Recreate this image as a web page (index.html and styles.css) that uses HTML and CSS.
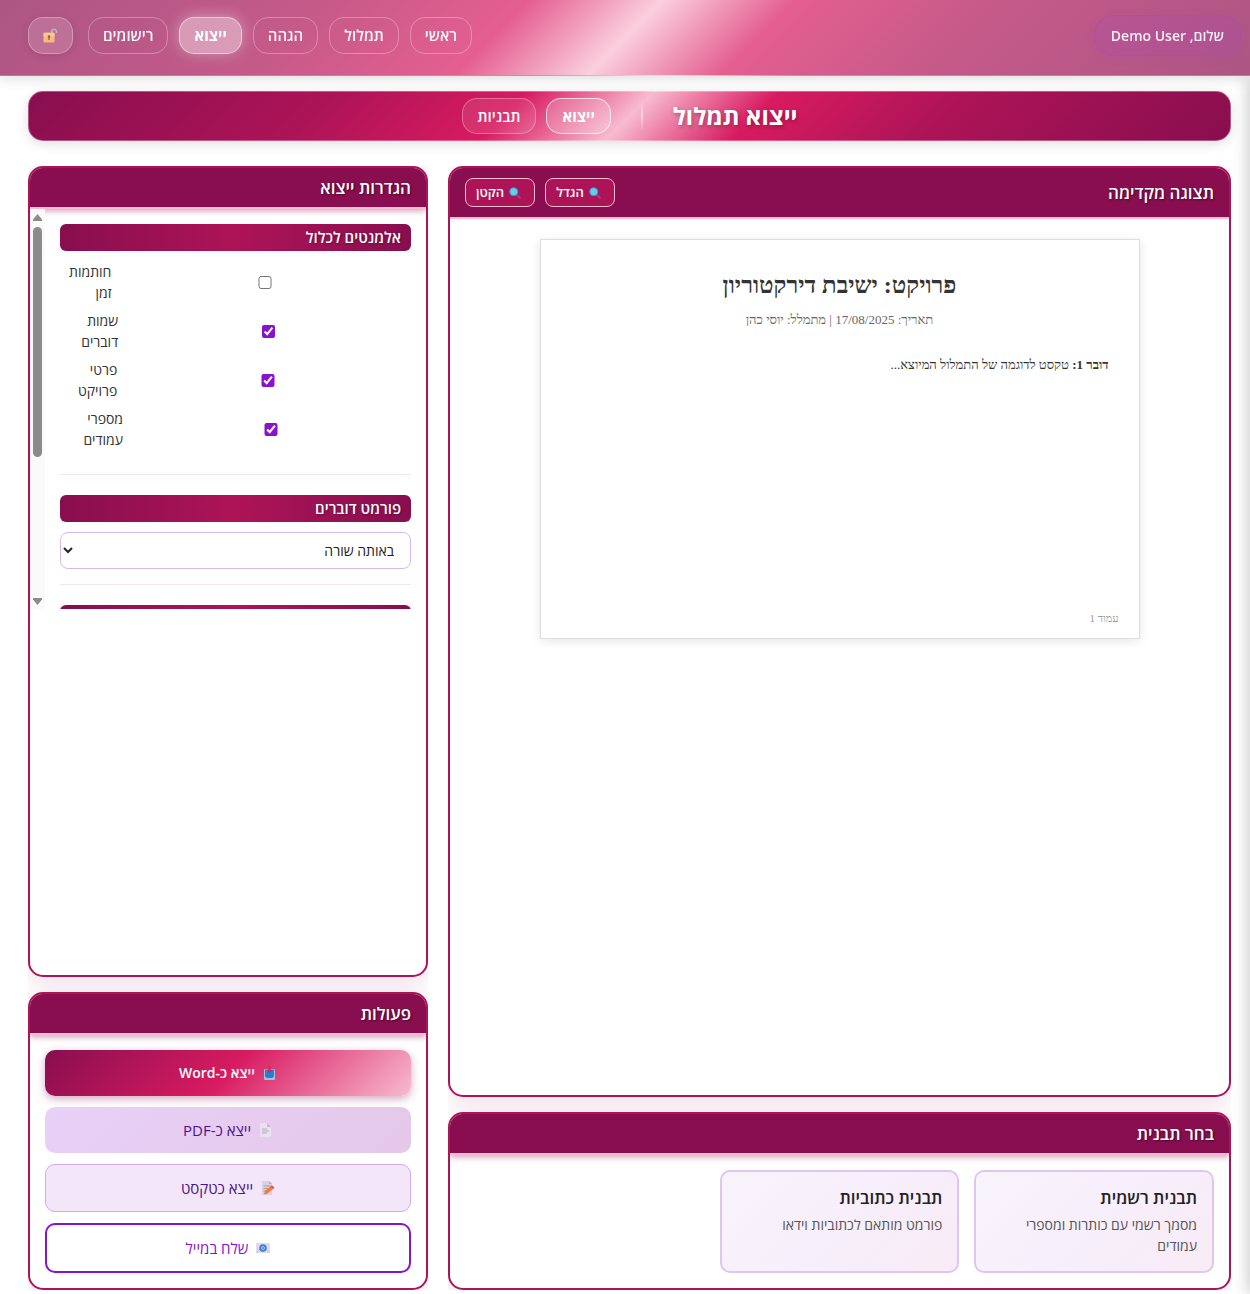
FILE: index.html
```html
<!DOCTYPE html>
<html lang="he" dir="rtl">
<head>
<meta charset="utf-8">
<meta name="viewport" content="width=device-width, initial-scale=1">
<title>ייצוא תמלול</title>
<link rel="stylesheet" href="styles.css">
</head>
<body>
<header class="site-header">
  <div class="user-pill">שלום, Demo User</div>
  <nav class="site-nav">
    <a class="nav-link" href="#">ראשי</a>
    <a class="nav-link" href="#">תמלול</a>
    <a class="nav-link" href="#">הגהה</a>
    <a class="nav-link nav-link-active" href="#">ייצוא</a>
    <a class="nav-link" href="#">רישומים</a>
    <button class="nav-link lock-button" type="button" aria-label="נעילה">
      <svg class="icon-lock" viewBox="0 0 15 15"><path d="M8.700 5.500V3.700a2.400 2.400 0 0 1 4.800 0V5" fill="none" stroke="#b9b3c4" stroke-width="1.600"/><rect x="0.500" y="4.800" width="11" height="9.700" rx="1" fill="#fbb878"/><rect x="0.500" y="4.800" width="11" height="4" rx="1" fill="#fdca85"/><circle cx="6" cy="8.600" r="1.300" fill="#7b6270"/><path d="M6 8.600v3.300" stroke="#7b6270" stroke-width="1.200"/></svg>
    </button>
  </nav>
</header>

<div class="page">
  <div class="title-bar">
    <h1 class="page-title">ייצוא תמלול</h1>
    <span class="title-divider"></span>
    <nav class="tabs">
      <a class="tab tab-active" href="#">ייצוא</a>
      <a class="tab" href="#">תבניות</a>
    </nav>
  </div>

  <main class="workspace">
    <div class="column column-main">
      <section class="panel panel-grow">
        <div class="panel-header panel-header-tools">
          <h2 class="panel-title">תצוגה מקדימה</h2>
          <div class="zoom-tools">
            <button class="zoom-button" type="button"><svg class="icon-zoom" viewBox="-1 0 16 12"><path d="M7.500 7.500l3.300 3.300" stroke="#7a4f93" stroke-width="2" stroke-linecap="round"/><circle cx="4.700" cy="4.700" r="4" fill="#5fd0ee" stroke="#4a90c4"/></svg>הגדל</button>
            <button class="zoom-button" type="button"><svg class="icon-zoom" viewBox="-1 0 16 12"><path d="M7.500 7.500l3.300 3.300" stroke="#7a4f93" stroke-width="2" stroke-linecap="round"/><circle cx="4.700" cy="4.700" r="4" fill="#5fd0ee" stroke="#4a90c4"/></svg>הקטן</button>
          </div>
        </div>
        <div class="preview-area">
          <article class="sheet">
            <h3 class="sheet-title">פרויקט: ישיבת דירקטוריון</h3>
            <p class="sheet-meta">תאריך: 17/08/2025 | מתמלל: יוסי כהן</p>
            <p class="sheet-text"><strong>דובר 1:</strong> טקסט לדוגמה של התמלול המיוצא...</p>
            <p class="sheet-footer">עמוד 1</p>
          </article>
        </div>
      </section>

      <section class="panel">
        <div class="panel-header"><h2 class="panel-title">בחר תבנית</h2></div>
        <div class="template-grid">
          <div class="template-card">
            <h3 class="template-name">תבנית רשמית</h3>
            <p class="template-desc">מסמך רשמי עם כותרות ומספרי עמודים</p>
          </div>
          <div class="template-card">
            <h3 class="template-name">תבנית כתוביות</h3>
            <p class="template-desc">פורמט מותאם לכתוביות וידאו</p>
          </div>
        </div>
      </section>
    </div>

    <div class="column column-side">
      <section class="panel panel-grow">
        <div class="panel-header"><h2 class="panel-title">הגדרות ייצוא</h2></div>
        <div class="settings">
          <div class="settings-scroll">
            <div class="setting-group">
              <h3 class="group-title">אלמנטים לכלול</h3>
              <div class="check-list">
                <label class="check-row"><input class="check" type="checkbox"><span>חותמות זמן</span></label>
                <label class="check-row"><input class="check" type="checkbox" checked><span>שמות דוברים</span></label>
                <label class="check-row"><input class="check" type="checkbox" checked><span>פרטי פרויקט</span></label>
                <label class="check-row"><input class="check" type="checkbox" checked><span>מספרי עמודים</span></label>
              </div>
            </div>
            <div class="setting-group">
              <h3 class="group-title"><label for="speaker-format">פורמט דוברים</label></h3>
              <select class="format-select" id="speaker-format">
                <option>באותה שורה</option>
              </select>
            </div>
            <div class="setting-group setting-group-last">
              <div class="group-title"></div>
            </div>
          </div>
          <div class="scrollbar" aria-hidden="true">
            <svg class="scroll-arrow" viewBox="0 0 9 7"><path d="M4.500 0L9 5.500V7H0V5.500z" fill="#8b8b8b"/></svg>
            <div class="scroll-track"><div class="scroll-thumb"></div></div>
            <svg class="scroll-arrow" viewBox="0 0 9 7"><path d="M4.500 7L9 1.500V0H0v1.500z" fill="#8b8b8b"/></svg>
          </div>
        </div>
      </section>

      <section class="panel">
        <div class="panel-header"><h2 class="panel-title">פעולות</h2></div>
        <div class="actions">
          <button class="action action-word" type="button"><svg class="icon-action" viewBox="0 0 14 14"><rect x="1" y="3" width="11" height="11" rx="1" fill="#a9bfd8"/><path d="M2 3.500h9v7l-2 1.500H4l-2-1.500z" fill="#1c84d8"/><path d="M5.500 0h2v4h2l-3 3.500L3.500 4h2z" fill="#c9295c"/></svg>ייצא כ-Word</button>
          <button class="action action-pdf" type="button"><svg class="icon-action" viewBox="0 0 14 14"><path d="M1 0h7l4 4v10H1z" fill="#e9e0f0"/><path d="M8 0l4 4H8z" fill="#c5bccf"/><path d="M3 6h5M3 8h7M3 10h5" stroke="#b5adbf"/></svg>ייצא כ-PDF</button>
          <button class="action action-text" type="button"><svg class="icon-action" viewBox="0 0 14 14"><path d="M1 0h7l3 3v11H1z" fill="#d9d1e0"/><path d="M8 0l3 3H8z" fill="#b5adbd"/><path d="M2.500 5h7M2.500 7.500h6M2.500 10h4" stroke="#a79fb0"/><path d="M3 13.500l1-3.500 6.500-5.500 2.500 2.500-6.500 5.500z" fill="#f47a3c"/><path d="M9.500 5.500l1.500-1.300 2.300 2.300L12 8z" fill="#ef5350"/></svg>ייצא כטקסט</button>
          <button class="action action-mail" type="button"><svg class="icon-action" viewBox="0 0 14 14"><rect y="2" width="14" height="10" fill="#e2daec"/><path d="M0 12l5-5M14 12L9 7" stroke="#c9bfd8"/><circle cx="7" cy="7" r="3.800" fill="#3f7fd0"/><circle cx="7" cy="7" r="1.500" fill="none" stroke="#a9cdf2"/></svg>שלח במייל</button>
        </div>
      </section>
    </div>
  </main>
</div>
<aside class="drawer"></aside>
</body>
</html>
```
FILE: styles.css
```css
* {
  box-sizing: border-box;
  margin: 0;
}

body {
  background: #fff;
  color: #333;
  font-family: "Open Sans", "Noto Sans", sans-serif;
  font-size: 14px;
  line-height: 22px;
}

a {
  color: inherit;
  text-decoration: none;
}

button,
select {
  font-family: inherit;
}

/* Header */
.site-header {
  position: relative;
  z-index: 2;
  display: flex;
  justify-content: space-between;
  align-items: center;
  padding: 15px 9px 19px 28px;
  background: linear-gradient(135deg, #ac5684 0%, #c65a89 25%, #e45f90 40%, #facfde 50%, #e45f90 60%, #c65a89 75%, #ac5684 100%);
  border-bottom: 1px solid rgba(255, 255, 255, 0.2);
  box-shadow: 0 3px 12px rgba(0, 0, 0, 0.13);
}

.user-pill {
  padding: 8px 16px;
  border: 1px solid rgba(171, 71, 188, 0.4);
  border-radius: 20px;
  background: rgba(171, 71, 188, 0.2);
  box-shadow: 0 2px 8px rgba(171, 71, 188, 0.15);
  color: rgba(255, 255, 255, 0.9);
  font-weight: 600;
  line-height: 23px;
}

.site-nav {
  display: flex;
  align-items: center;
  gap: 11px;
}

.nav-link {
  padding: 7px 14px;
  border: 1px solid rgba(255, 255, 255, 0.3);
  border-radius: 15px;
  color: rgba(255, 255, 255, 0.95);
  font-size: 15px;
  font-weight: 600;
  line-height: 21px;
}

.nav-link-active {
  border-color: rgba(255, 255, 255, 0.5);
  background: rgba(255, 255, 255, 0.4);
  box-shadow: 0 0 15px rgba(255, 255, 255, 0.45), 0 4px 12px rgba(0, 0, 0, 0.1);
  color: #fff;
  font-weight: 700;
}

.lock-button {
  display: flex;
  align-items: center;
  height: 37px;
  margin-right: 4px;
  background: rgba(255, 255, 255, 0.15);
  box-shadow: 0 2px 8px rgba(0, 0, 0, 0.1);
}

.icon-lock {
  width: 15px;
  height: 15px;
}

/* Title bar */
.page {
  padding: 15px 19px 4px 28px;
}

.title-bar {
  display: flex;
  justify-content: center;
  align-items: center;
  gap: 30px;
  height: 50px;
  margin-bottom: 25px;
  border: 1px solid rgba(255, 255, 255, 0.3);
  border-radius: 15px;
  background: linear-gradient(135deg, #880e4f 0%, #ad1457 25%, #d81b60 40%, #f8bbd0 50%, #d81b60 60%, #ad1457 75%, #880e4f 100%) border-box;
  box-shadow: 0 3px 12px rgba(0, 0, 0, 0.13);
}

.page-title {
  color: #fff;
  font-size: 24px;
  font-weight: 700;
  line-height: 32px;
  text-shadow: 1px 2px 4px rgba(0, 0, 0, 0.3);
}

.title-divider {
  width: 2px;
  height: 30px;
  background: linear-gradient(transparent, rgba(255, 255, 255, 0.5), transparent);
}

.tabs {
  display: flex;
  gap: 10px;
}

.tab {
  padding: 6px 15px;
  border: 1px solid rgba(255, 255, 255, 0.3);
  border-radius: 15px;
  background: rgba(255, 255, 255, 0.1);
  color: #fff;
  font-size: 15px;
  font-weight: 600;
}

.tab-active {
  border-color: rgba(255, 255, 255, 0.7);
  background: rgba(255, 255, 255, 0.2);
  font-weight: 700;
}

/* Columns and panels */
.workspace {
  display: grid;
  grid-template-columns: minmax(0, 1fr) 400px;
  gap: 20px;
  min-height: calc(100vh - 170px);
}

.column {
  display: flex;
  flex-direction: column;
  gap: 15px;
  overflow: hidden;
}

.panel {
  border: 2px solid #ad1457;
  border-radius: 15px;
  background: #fff;
  box-shadow: 0 4px 20px rgba(136, 14, 79, 0.15);
  overflow: hidden;
}

.panel-grow {
  flex: 1;
}

.panel-header {
  display: flex;
  justify-content: space-between;
  align-items: center;
  padding: 8px 15px;
  border-bottom: 2px solid #f8bbd0;
  background: #880e4f;
  box-shadow: 0 2px 6px rgba(136, 14, 79, 0.4);
}

.panel-header-tools {
  padding: 10px 15px;
  box-shadow: none;
}

.panel-title {
  color: #fff;
  font-size: 17px;
  font-weight: 600;
  line-height: 23px;
  text-shadow: 1px 1px 2px rgba(0, 0, 0, 0.5);
}

.zoom-tools {
  display: flex;
  gap: 10px;
}

.zoom-button {
  display: flex;
  align-items: center;
  gap: 4px;
  padding: 5px 10px;
  border: 1px solid #f8bbd0;
  border-radius: 8px;
  background: #ad1457;
  color: #fff;
  font-size: 13px;
  font-weight: 600;
  line-height: 17px;
}

.icon-zoom {
  width: 16px;
  height: 12px;
}

/* Preview */
.preview-area {
  padding: 20px;
}

.sheet {
  position: relative;
  max-width: 600px;
  min-height: 400px;
  margin: 0 auto;
  padding: 30px;
  border: 1px solid #ddd;
  background: #fff;
  box-shadow: 0 2px 10px rgba(0, 0, 0, 0.1);
  font-family: "Liberation Serif", "Times New Roman", serif;
}

.sheet-title {
  margin-bottom: 9px;
  font-size: 24px;
  line-height: 30px;
  text-align: center;
}

.sheet-meta {
  margin-bottom: 23px;
  color: #666;
  font-size: 13px;
  text-align: center;
}

.sheet-text {
  font-size: 13px;
}

.sheet-footer {
  position: absolute;
  right: 20px;
  bottom: 10px;
  color: #999;
  font-size: 11px;
  line-height: 20px;
}

/* Templates */
.template-grid {
  display: grid;
  grid-template-columns: repeat(auto-fill, minmax(200px, 1fr));
  gap: 15px;
  padding: 15px;
}

.template-card {
  padding: 15px;
  border: 2px solid #e1c4f2;
  border-radius: 10px;
  background: linear-gradient(135deg, #f8f4fb, #f7effc 50%, #f8ebf5);
}

.template-name {
  margin-bottom: 5px;
  color: #222;
  font-size: 17px;
  font-weight: 600;
}

.template-desc {
  color: #555;
  font-size: 14px;
  line-height: 21px;
}

/* Export settings */
.settings {
  display: flex;
  height: 400px;
}

.settings-scroll {
  flex: 1;
  padding: 15px;
  overflow-y: auto;
  scrollbar-width: none;
}

.scrollbar {
  display: flex;
  flex-direction: column;
  align-items: center;
  gap: 6px;
  width: 15px;
  padding: 5px 0 4px;
  background: #fafafa;
}

.scroll-arrow {
  width: 9px;
  height: 7px;
}

.scroll-track {
  flex: 1;
  width: 9px;
}

.scroll-thumb {
  height: 63%;
  border-radius: 5px;
  background: #8b8b8b;
}

.setting-group {
  margin-bottom: 20px;
  padding-bottom: 15px;
  border-bottom: 1px solid #f3e5f9;
}

.setting-group-last {
  min-height: 200px;
}

.group-title {
  min-height: 27px;
  margin-bottom: 10px;
  padding: 3px 10px;
  border-radius: 6px;
  background: linear-gradient(90deg, #880e4f, #ad1457, #880e4f);
  color: #fff;
  font-size: 15px;
  font-weight: 600;
  line-height: 21px;
  text-shadow: 1px 1px 2px rgba(0, 0, 0, 0.3);
}

.check-list {
  display: grid;
  gap: 7px;
  margin-bottom: 9px;
}

.check-row {
  display: flex;
  align-items: center;
  gap: 8px;
  line-height: 21px;
}

.check {
  width: 100%;
  height: 13px;
  accent-color: #8a12cf;
}

.format-select {
  display: block;
  width: 100%;
  height: 37px;
  padding: 0 12px;
  border: 1px solid #d9b8f0;
  border-radius: 8px;
  background: #fff;
  color: #222;
  font-size: 14px;
}

/* Actions */
.actions {
  display: grid;
  gap: 11px;
  padding: 15px;
}

.action {
  display: flex;
  justify-content: center;
  align-items: center;
  gap: 8px;
  padding: 12px;
  border: 0;
  border-radius: 10px;
  font-size: 15px;
  font-weight: 500;
  line-height: 22px;
}

.action-word {
  background: linear-gradient(135deg, #880e4f 0%, #d81b60 50%, #f8bbd0 100%);
  box-shadow: 0 3px 8px rgba(136, 14, 79, 0.35);
  color: #fff;
  font-size: 14px;
  font-weight: 600;
}

.action-pdf {
  background: linear-gradient(135deg, #e8d0f8, #e5c8e8);
  color: #4a148c;
}

.action-text {
  border: 1px solid #d4a9ee;
  background: #f3e6f9;
  color: #4a148c;
}

.action-mail {
  border: 2px solid #8a12cf;
  background: #fff;
  color: #8a12cf;
}

.icon-action {
  width: 14px;
  height: 14px;
}

/* Closed drawer resting just past the window edge */
.drawer {
  position: fixed;
  top: 76px;
  right: -10px;
  bottom: 0;
  width: 10px;
  box-shadow: 0 0 16px rgba(0, 0, 0, 0.3);
}
```
